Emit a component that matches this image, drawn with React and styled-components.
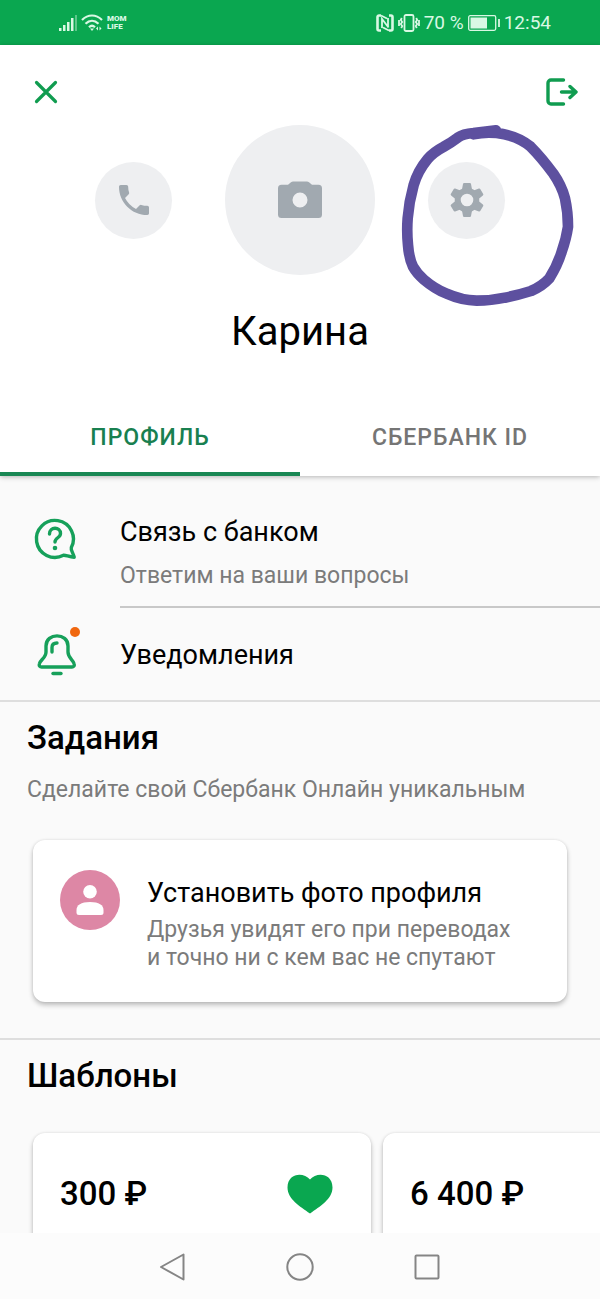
import React, { useState } from "react";
import styled, { createGlobalStyle } from "styled-components";

const GlobalStyle = createGlobalStyle`
  * {
    box-sizing: border-box;
  }

  body {
    margin: 0;
    background: #fafafa;
    color: #000;
    font-family: Roboto, "Noto Sans", sans-serif;
  }

  h1, h2, h3, p, ul {
    margin: 0;
    padding: 0;
  }

  button {
    border: 0;
    padding: 0;
    background: none;
    font: inherit;
    cursor: pointer;
  }

  svg {
    display: block;
    flex: none;
  }
`;

const Screen = styled.div`
  display: flex;
  flex-direction: column;
  height: 100vh;
`;

const StatusBar = styled.div`
  display: flex;
  flex: none;
  align-items: center;
  justify-content: space-between;
  height: 45px;
  padding: 0 49px 0 59px;
  background: #0aa750;
  color: #d9f8e4;
  font-size: 19px;
`;

const StatusGroup = styled.div`
  display: flex;
  align-items: center;
  gap: 4px;
`;

const Carrier = styled.span`
  font-size: 8px;
  font-weight: 900;
  line-height: 8px;
`;

const Header = styled.header`
  position: relative;
  flex: none;
  background: #fff;
  box-shadow: 0 1px 5px rgba(0, 0, 0, 0.28);
`;

const TopBar = styled.div`
  display: flex;
  justify-content: space-between;
  padding: 23px 14px 9px 22px;
`;

const IconButton = styled.button`
  display: flex;
  align-items: center;
  justify-content: center;
  width: 48px;
  height: 48px;
`;

const Actions = styled.div`
  display: flex;
  align-items: center;
  justify-content: center;
  gap: 53px;
`;

const RoundButton = styled.button`
  position: relative;
  display: flex;
  align-items: center;
  justify-content: center;
  width: ${({ $size }) => $size}px;
  height: ${({ $size }) => $size}px;
  border-radius: 50%;
  background: #eeeff1;
  color: #a1a9b0;
`;

const Marker = styled.svg`
  position: absolute;
  top: -47px;
  left: -33px;
  pointer-events: none;
`;

const Name = styled.h1`
  margin-top: 33px;
  font-size: 40px;
  font-weight: 400;
  line-height: 48px;
  text-align: center;
`;

const Tabs = styled.div`
  display: flex;
  margin-top: 44px;
`;

const Tab = styled.button`
  flex: 1;
  height: 76px;
  padding-top: 2px;
  border-bottom: 4px solid ${({ $active }) => ($active ? "#198754" : "transparent")};
  color: ${({ $active }) => ($active ? "#198050" : "#757575")};
  font-size: 23px;
  font-weight: 500;
  letter-spacing: 1px;
`;

const Main = styled.main`
  flex: 1;
  min-height: 0;
  overflow: hidden;
`;

const Row = styled.a`
  display: grid;
  grid-template-columns: 89px 1fr;
  align-items: ${({ $single }) => ($single ? "center" : "start")};
  margin-left: 31px;
  color: inherit;
  text-decoration: none;
`;

const RowIcon = styled.span`
  position: relative;
  width: 48px;
  margin-top: ${({ $offset }) => $offset || 0}px;
`;

const Dot = styled.span`
  position: absolute;
  top: -3px;
  right: -1px;
  width: 10px;
  height: 10px;
  border-radius: 50%;
  background: #f0670f;
`;

const RowText = styled.span`
  display: flex;
  flex-direction: column;
  gap: 14px;
  padding: ${({ $single }) => ($single ? "31px 0 29px" : "40px 0 16px")};
  border-bottom: ${({ $single }) => ($single ? "0" : "2px solid #c8c8c8")};
`;

const Title = styled.span`
  font-size: 27px;
  font-weight: 400;
  line-height: 32px;
`;

const Caption = styled.span`
  color: #7b7b7b;
  font-size: 23px;
  line-height: 28px;
`;

const Section = styled.section`
  padding: 16px 0 36px;
  border-top: 2px solid #dedede;
`;

const SectionTitle = styled.h2`
  margin-left: 27px;
  font-size: 33px;
  font-weight: 500;
  line-height: 40px;
`;

const SectionCaption = styled.p`
  margin: 18px 27px 0;
  color: #7b7b7b;
  font-size: 23px;
  line-height: 28px;
`;

const Card = styled.a`
  display: flex;
  border-radius: 12px;
  background: #fff;
  box-shadow: 0 3px 5px rgba(0, 0, 0, 0.24), 0 0 3px rgba(0, 0, 0, 0.1);
  color: inherit;
  text-decoration: none;
`;

const TaskCard = styled(Card)`
  gap: 27px;
  margin: 36px 33px 0;
  padding: 30px 27px;
`;

const TaskAvatar = styled.span`
  display: flex;
  flex: none;
  align-items: center;
  justify-content: center;
  width: 60px;
  height: 60px;
  border-radius: 50%;
  background: #dd87a5;
  color: #fff;
`;

const TaskText = styled.span`
  display: flex;
  flex-direction: column;
  gap: 7px;
  padding-top: 7px;
`;

const Templates = styled.div`
  display: flex;
  gap: 12px;
  margin-top: 37px;
  padding-left: 33px;
`;

const TemplateCard = styled(Card)`
  flex: none;
  align-items: flex-start;
  justify-content: space-between;
  width: 338px;
  height: 200px;
  padding: 41px 38px 0 27px;
`;

const Amount = styled.span`
  font-size: 33px;
  font-weight: 500;
  line-height: 40px;
`;

const NavBar = styled.nav`
  display: flex;
  flex: none;
  align-items: center;
  justify-content: center;
  gap: 79px;
  height: 66px;
  padding-top: 2px;
  background: #fcfcfc;
`;

function SignalIcon() {
  return (
    <svg width="18" height="18" viewBox="0 0 18 18" fill="currentColor">
      <rect x="0" y="14" width="2.500" height="3" />
      <rect x="4" y="11" width="2.500" height="6" />
      <rect x="8" y="8" width="2.500" height="9" />
      <rect x="12" y="4" width="2.500" height="13" />
      <rect x="16" y="1" width="2" height="16" opacity="0.4" />
    </svg>
  );
}

function WifiIcon() {
  return (
    <svg width="22" height="18" viewBox="0 0 22 18" fill="none" stroke="currentColor" strokeWidth="2.200">
      <path d="M1 6C7 0 15 0 21 6M4.500 9.800C8.500 5.800 13.500 5.800 17.500 9.800M8 13.200C10 11.300 12 11.300 14 13.200" />
      <path d="M11 17l-2-2.500h4zM17 12.500v4l-2-2zM18.500 12.500l2 2-2 2z" fill="currentColor" stroke="none" />
    </svg>
  );
}

function NfcIcon() {
  return (
    <svg width="18" height="18" viewBox="0 0 18 18" fill="none" stroke="currentColor">
      <path d="M5 16.500H3A1.500 1.500 0 0 1 1.500 15V3A1.500 1.500 0 0 1 3 1.500h2M13 1.500h2A1.500 1.500 0 0 1 16.500 3v12a1.500 1.500 0 0 1-1.500 1.500h-2" strokeWidth="2.600" />
      <path d="M6 14V5l6.500 8.500M12 4v9" strokeWidth="1.800" />
      <path d="M5 1.500l6 3M7 13.500l6 3" strokeWidth="1.800" />
    </svg>
  );
}

function VibrateIcon() {
  return (
    <svg width="22" height="18" viewBox="0 0 22 18" fill="none" stroke="currentColor" strokeWidth="1.800">
      <rect x="6.500" y="1" width="9" height="16" rx="1.500" />
      <path d="M3.800 4l-1 2 1.400 2-1.400 2 1.400 2-1 2M1 6v6M18.200 4l1 2-1.400 2 1.400 2-1.400 2 1 2M21 6v6" />
    </svg>
  );
}

function BatteryIcon() {
  return (
    <svg width="32" height="16" viewBox="0 0 32 16" fill="none" stroke="currentColor">
      <rect x=".7" y=".7" width="27" height="14.600" rx="1.500" strokeWidth="1.300" />
      <rect x="2.500" y="2.500" width="16.500" height="11" fill="currentColor" stroke="none" />
      <path d="M31 4v8" strokeWidth="1.800" />
    </svg>
  );
}

function CloseIcon() {
  return (
    <svg width="24" height="24" viewBox="0 0 24 24" fill="none" stroke="#109c50" strokeWidth="3.200" strokeLinecap="round">
      <path d="M2.500 2.500l19 19M21.500 2.500l-19 19" />
    </svg>
  );
}

function LogoutIcon() {
  return (
    <svg
      width="32"
      height="28"
      viewBox="0 0 32 28"
      fill="none"
      stroke="#109c50"
      strokeWidth="3.400"
      strokeLinecap="round"
      strokeLinejoin="round"
    >
      <path d="M17.500 2H5a3 3 0 0 0-3 3v18a3 3 0 0 0 3 3h12.500M15.500 14h14M24 8.500l6 5.500-6 5.500" />
    </svg>
  );
}

function PhoneIcon() {
  return (
    <svg width="40" height="40" viewBox="0 0 24 24" fill="currentColor">
      <path d="M20 15.500c-1.250 0-2.450-.2-3.570-.57a1 1 0 0 0-1.020.24l-2.200 2.200a15 15 0 0 1-6.590-6.590l2.200-2.210a1 1 0 0 0 .25-1A11.400 11.400 0 0 1 8.500 4c0-.55-.45-1-1-1H4c-.55 0-1 .45-1 1 0 9.390 7.610 17 17 17 .55 0 1-.45 1-1v-3.500c0-.55-.45-1-1-1z" />
    </svg>
  );
}

function CameraIcon() {
  return (
    <svg width="44" height="38" viewBox="0 0 44 38" fill="currentColor">
      <path
        fillRule="evenodd"
        d="M13 1.200Q14 .5 15 .5h14q1 0 2 .7l3 2.600h6.500Q44 3.800 44 7.500v26q0 3.500-3.500 3.500h-37Q0 37 0 33.500v-26Q0 3.800 3.500 3.800H10zM22 11.500a7.500 7.500 0 1 0 0 15 7.500 7.500 0 0 0 0-15z"
      />
    </svg>
  );
}

const teeth = [0, 60, 120, 180, 240, 300];

function GearIcon() {
  return (
    <svg width="36" height="36" viewBox="-18 -18 36 36" fill="currentColor">
      <circle r="9.300" fill="none" stroke="currentColor" strokeWidth="6" />
      {teeth.map((angle) => (
        <path key={angle} d="M-5-10.500l1-5.500q.2-1 1-1h6q.8 0 1 1l1 5.500z" transform={`rotate(${angle})`} />
      ))}
    </svg>
  );
}

function PersonIcon() {
  return (
    <svg width="28" height="32" viewBox="0 0 28 32" fill="currentColor">
      <circle cx="14" cy="7.800" r="6.800" />
      <path d="M.5 26c0-5 4.500-8 13.500-8s13.500 3 13.500 8v2.500q0 2.500-2.500 2.500H3Q.5 31 .5 28.500z" />
    </svg>
  );
}

function HelpIcon() {
  return (
    <svg
      width="48"
      height="48"
      viewBox="0 0 48 48"
      fill="none"
      stroke="#16a05a"
      strokeWidth="3.400"
      strokeLinecap="round"
      strokeLinejoin="round"
    >
      <path d="M40.300 32.500A18.500 18.500 0 1 0 32.500 40.300C35 40 38 42 43.200 42.200C42.200 38 39.500 35 40.300 32.500z" />
      <path d="M18.500 19c0-7.500 11-7.500 11-.5 0 4.500-5.500 4-5.500 8.500" />
      <circle cx="24" cy="33" r="2.300" fill="#16a05a" stroke="none" />
    </svg>
  );
}

function BellIcon() {
  return (
    <svg
      width="48"
      height="48"
      viewBox="0 0 48 48"
      fill="none"
      stroke="#16a05a"
      strokeWidth="3.400"
      strokeLinecap="round"
      strokeLinejoin="round"
    >
      <path d="M15 16C15 2.500 37 2.500 37 16v6c0 6 5.500 8 6.200 12 .4 2-.7 3-2.200 3H10.500c-1.500 0-2.600-1-2.200-3C9 30 15 28 15 22z" />
      <path d="M21 22v-4.500c0-3 1.500-4.500 5-4.500" />
      <path d="M22 43.500h8" />
    </svg>
  );
}

function HeartIcon() {
  return (
    <svg width="46" height="40" viewBox="0 0 46 40" fill="#0aa750">
      <path d="M23 5.500C30-2.500 45.500-.5 45.500 13.500 45.500 25 33 32.500 23 39.500 13 32.500.5 25 .5 13.500.5-.5 16-2.500 23 5.500z" />
    </svg>
  );
}

const templates = [
  { id: 1, amount: "300 ₽", favorite: true },
  { id: 2, amount: "6 400 ₽", favorite: false },
];

export default function App() {
  const [tab, setTab] = useState("profile");

  return (
    <Screen>
      <GlobalStyle />
      <StatusBar>
        <StatusGroup>
          <SignalIcon />
          <WifiIcon />
          <Carrier>
            MOM
            <br />
            LIFE
          </Carrier>
        </StatusGroup>
        <StatusGroup>
          <NfcIcon />
          <VibrateIcon />
          <span>70 %</span>
          <BatteryIcon />
          <span>12:54</span>
        </StatusGroup>
      </StatusBar>

      <Header>
        <TopBar>
          <IconButton aria-label="Закрыть">
            <CloseIcon />
          </IconButton>
          <IconButton aria-label="Выйти">
            <LogoutIcon />
          </IconButton>
        </TopBar>
        <Actions>
          <RoundButton $size={77} aria-label="Телефон">
            <PhoneIcon />
          </RoundButton>
          <RoundButton $size={150} aria-label="Фото">
            <CameraIcon />
          </RoundButton>
          <RoundButton $size={77} aria-label="Настройки">
            <GearIcon />
            <Marker
              width="190"
              height="200"
              viewBox="0 0 570 600"
              fill="none"
              stroke="#5d509f"
              strokeWidth="32"
              strokeLinecap="round"
              strokeLinejoin="round"
            >
              <path d="M303 46Q270 50 235 54Q205 56 188 68Q168 83 145 96Q115 112 98 132Q68 168 56 210Q42 260 38 310Q35 350 39 390Q42 430 54 455Q65 475 87 494Q120 522 155 536Q200 556 245 557Q290 557 330 548Q370 540 408 528Q442 513 463 490Q488 450 500 410Q514 370 519 335Q519 290 510 250Q500 212 475 176Q440 128 407 95Q368 62 305 54Q270 50 235 58" />
            </Marker>
          </RoundButton>
        </Actions>
        <Name>Карина</Name>
        <Tabs role="tablist">
          <Tab role="tab" aria-selected={tab === "profile"} $active={tab === "profile"} onClick={() => setTab("profile")}>
            ПРОФИЛЬ
          </Tab>
          <Tab role="tab" aria-selected={tab === "id"} $active={tab === "id"} onClick={() => setTab("id")}>
            СБЕРБАНК ID
          </Tab>
        </Tabs>
      </Header>

      <Main>
        <Row href="#contact">
          <RowIcon $offset={39}>
            <HelpIcon />
          </RowIcon>
          <RowText>
            <Title>Связь с банком</Title>
            <Caption>Ответим на ваши вопросы</Caption>
          </RowText>
        </Row>
        <Row href="#notifications" $single>
          <RowIcon>
            <BellIcon />
            <Dot />
          </RowIcon>
          <RowText $single>
            <Title>Уведомления</Title>
          </RowText>
        </Row>

        <Section>
          <SectionTitle>Задания</SectionTitle>
          <SectionCaption>Сделайте свой Сбербанк Онлайн уникальным</SectionCaption>
          <TaskCard href="#photo">
            <TaskAvatar>
              <PersonIcon />
            </TaskAvatar>
            <TaskText>
              <Title>Установить фото профиля</Title>
              <Caption>
                Друзья увидят его при переводах
                <br />и точно ни с кем вас не спутают
              </Caption>
            </TaskText>
          </TaskCard>
        </Section>

        <Section>
          <SectionTitle>Шаблоны</SectionTitle>
          <Templates>
            {templates.map((item) => (
              <TemplateCard key={item.id} href={`#template-${item.id}`}>
                <Amount>{item.amount}</Amount>
                {item.favorite && <HeartIcon />}
              </TemplateCard>
            ))}
          </Templates>
        </Section>
      </Main>

      <NavBar>
        <IconButton aria-label="Назад">
          <svg width="28" height="28" viewBox="0 0 28 28" fill="none" stroke="#858585" strokeWidth="2" strokeLinejoin="round">
            <path d="M24.500 1.500v25L2 14z" />
          </svg>
        </IconButton>
        <IconButton aria-label="Домой">
          <svg width="28" height="28" viewBox="0 0 28 28" fill="none" stroke="#858585" strokeWidth="2">
            <circle cx="14" cy="14" r="12.700" />
          </svg>
        </IconButton>
        <IconButton aria-label="Недавние">
          <svg width="28" height="28" viewBox="0 0 28 28" fill="none" stroke="#858585" strokeWidth="2">
            <rect x="2.500" y="2.500" width="23" height="23" rx="1" />
          </svg>
        </IconButton>
      </NavBar>
    </Screen>
  );
}
